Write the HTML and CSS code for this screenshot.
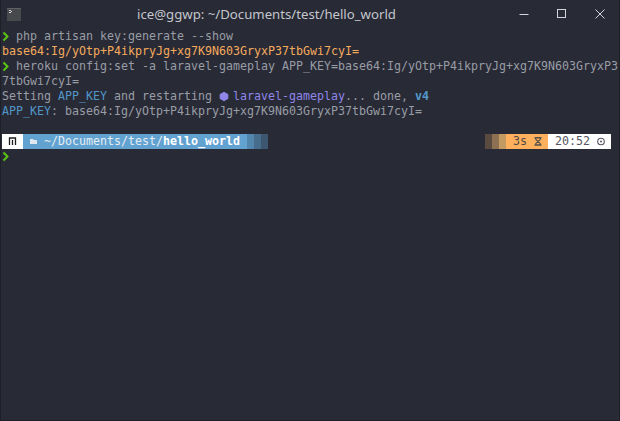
FILE: index.html
```html
<!DOCTYPE html>
<html lang="en">
<head>
<meta charset="utf-8">
<title>ice@ggwp: ~/Documents/test/hello_world</title>
<link rel="stylesheet" href="styles.css">
</head>
<body>
<div class="window">
  <header class="titlebar">
    <svg class="app-icon" width="14" height="13" viewBox="0 0 14 13"><rect width="14" height="13" fill="#48494d"/><rect width="14" height="1" fill="#5e6064"/><path d="M2 2.5h2M4 3.5h1M2 4.5h2" stroke="#d8d8d8" stroke-width="1"/></svg>
    <div class="title">ice@ggwp: ~/Documents/test/hello_world</div>
    <div class="controls">
      <svg width="10" height="10" viewBox="0 0 10 10"><path d="M0.5 5.5h9" stroke="#d3d6dc" stroke-width="1"/></svg>
      <svg width="10" height="10" viewBox="0 0 10 10"><rect x="0.5" y="0.5" width="8" height="8" fill="none" stroke="#d3d6dc" stroke-width="1"/></svg>
      <svg width="10" height="10" viewBox="0 0 10 10"><path d="M0.5 0.5l9 9M9.5 0.5l-9 9" stroke="#d3d6dc" stroke-width="1"/></svg>
    </div>
  </header>
  <main class="terminal">
    <div class="row"><svg class="chev" width="7" height="15" viewBox="0 0 7 15"><path d="M1.5 3.5L5.5 7.5L1.5 11.5" fill="none" stroke="#5cc80e" stroke-width="1.9"/></svg> php artisan key:generate --show</div>
    <div class="row orange">base64:Ig/yOtp+P4ikpryJg+xg7K9N603GryxP37tbGwi7cyI=</div>
    <div class="row"><svg class="chev" width="7" height="15" viewBox="0 0 7 15"><path d="M1.5 3.5L5.5 7.5L1.5 11.5" fill="none" stroke="#5cc80e" stroke-width="1.9"/></svg> heroku config:set -a laravel-gameplay APP_KEY=base64:Ig/yOtp+P4ikpryJg+xg7K9N603GryxP3</div>
    <div class="row">7tbGwi7cyI=</div>
    <div class="row">Setting <span class="blue">APP_KEY</span> and restarting <svg class="hex" width="7" height="15" viewBox="0 0 7 15"><path d="M5 2.8L9.3 5.2V9.8L5 12.2L0.7 9.8V5.2Z" fill="#8f86e8"/></svg> <span class="purple">laravel-gameplay</span>... done, <b class="blue">v4</b></div>
    <div class="row"><span class="blue">APP_KEY</span>: base64:Ig/yOtp+P4ikpryJg+xg7K9N603GryxP37tbGwi7cyI=</div>
    <div class="row"></div>
    <div class="row status">
      <div class="seg-group">
        <span class="seg os"><svg width="7" height="9" viewBox="0 0 7 9"><path d="M0.5 8V1H6.5V8M3.5 8V3" fill="none" stroke="#1c1c1c" stroke-width="1.3"/></svg></span>
        <span class="seg path"><svg class="folder" width="7" height="7" viewBox="0 0 7 7"><path d="M0 1H3L4 2H7V6H0Z" fill="#dfe8ef"/></svg> ~/Documents/test/<b>hello_world</b> </span>
        <span class="fade b1"></span><span class="fade b2"></span><span class="fade b3"></span>
      </div>
      <div class="seg-group">
        <span class="fade o1"></span><span class="fade o2"></span><span class="fade o3"></span>
        <span class="seg time">3s <svg width="8" height="9" viewBox="0 0 8 9"><path d="M0.5 0.7H7.5M0.5 8H7.5" fill="none" stroke="#55504a" stroke-width="1.4"/><path d="M1.8 1V2.5L6.2 6.5V8M6.2 1V2.5L1.8 6.5V8" fill="none" stroke="#55504a" stroke-width="1.1"/></svg></span>
        <span class="seg clock">20:52 <svg width="8" height="9" viewBox="0 0 8 9"><circle cx="4" cy="4.5" r="3.3" fill="none" stroke="#555660" stroke-width="1.1"/><circle cx="4" cy="4.5" r="1" fill="#555660"/></svg></span>
      </div>
    </div>
    <div class="row"><svg class="chev" width="7" height="15" viewBox="0 0 7 15"><path d="M1.5 3.5L5.5 7.5L1.5 11.5" fill="none" stroke="#5cc80e" stroke-width="1.9"/></svg></div>
  </main>
</div>
</body>
</html>
```
FILE: styles.css
```css
html, body {
  margin: 0;
  height: 100%;
  background: #282a36;
}
.window {
  height: 421px;
  width: 620px;
  box-sizing: border-box;
  display: flex;
  flex-direction: column;
  background: #282a36;
  border: solid #1e2027;
  border-width: 0 1px 1px;
  overflow: hidden;
}
.titlebar {
  height: 28px;
  flex: none;
  display: flex;
  align-items: center;
  padding-left: 6px;
}
.app-icon { flex: none; }
.title {
  flex: 1;
  margin-right: 7px;
  text-align: center;
  font: 13.2px/28px "Noto Sans", sans-serif;
  color: #c4c6cc;
  white-space: nowrap;
}
.controls {
  flex: none;
  width: 100px;
  display: flex;
  gap: 28px;
  align-items: center;
}
.controls svg { flex: none; }
.terminal {
  flex: 1;
  padding: 1px 0 0 1px;
  font-family: "DejaVu Sans Mono", monospace;
  font-size: 11.63px;
  line-height: 15px;
  color: #989da5;
}
.row {
  height: 15px;
  white-space: pre;
}
.row svg { vertical-align: top; overflow: visible; }
.orange { color: #f6ab5c; }
.blue { color: #5397c8; }
.purple { color: #8f86e8; }
.status {
  display: flex;
  justify-content: space-between;
  width: 609px;
}
.seg-group { display: flex; }
.seg { display: block; height: 15px; }
.seg svg { vertical-align: top; margin-top: 3px; }
.os {
  width: 21px;
  background: #fff;
  text-align: center;
}
.path {
  background: #62a2d1;
  color: #e4edf3;
  padding-left: 7px;
  width: 217px;
}
.path .folder { margin-top: 4px; }
.path b { color: #fff; }
.fade { display: block; width: 7px; height: 15px; }
.b1 { background: #5286ad; }
.b2 { background: #466d8c; }
.b3 { background: #3d5770; }
.o1 { background: #5b4a40; }
.o2 { background: #8e7052; }
.o3 { background: #c49a63; }
.time {
  background: #ffb05c;
  color: #4e4a48;
  padding-left: 7px;
  width: 35px;
}
.clock {
  background: #fff;
  color: #555660;
  padding-left: 7px;
  width: 56px;
}
```
